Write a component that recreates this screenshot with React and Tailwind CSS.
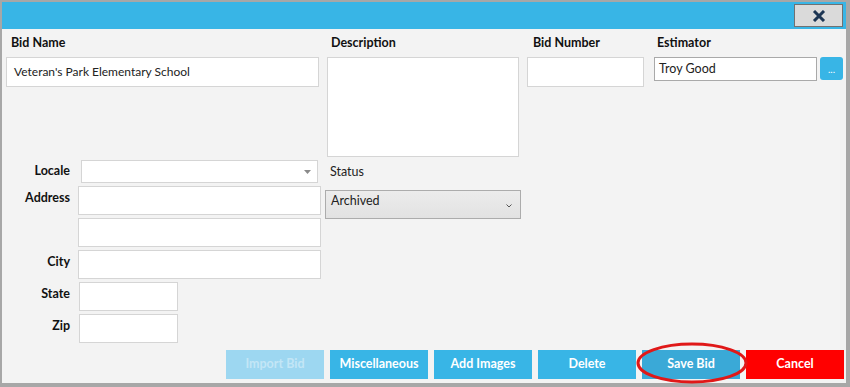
const font = "font-['Segoe_UI',Lato,'Liberation_Sans',sans-serif]"
const box = 'bg-white border border-[#d5d5d5]'

const Field = ({ label, children, labelTop = 'mt-[4px]' }) => (
	<div className='flex items-start'>
		<div className={`w-[68px] text-right text-[12.5px] leading-[16px] font-bold text-[#111] ${labelTop}`}>{label}</div>
		{children}
	</div>
)

const Btn = ({ children, className }) => (
	<button className={`w-[98px] h-[29px] text-[12.5px] font-bold ${className}`}>{children}</button>
)

const App = () => {
	return (
		<div className={`w-[850px] h-[387px] bg-[#a7a7a7] pt-[2px] pl-[2px] pr-[4px] pb-[4px] ${font}`}>
			<div className='w-full h-full bg-[#f3f3f3] flex flex-col'>

				{/* title bar */}
				<div className='h-[27px] bg-[#38b5e6] flex items-center justify-end pr-[3px]'>
					<button className='w-[49px] h-[23px] bg-[#dadada] border border-[#717171] flex items-center justify-center'>
						<svg width='14' height='12' viewBox='0 0 14 12'>
							<path d='M2 1 L12 11 M12 1 L2 11' stroke='#1c3553' strokeWidth='3' />
						</svg>
					</button>
				</div>

				{/* top row */}
				<div className='flex pl-[4px]'>
					<div className='w-[313px]'>
						<div className='h-[28px] flex items-center pl-[5px] text-[12.5px] font-bold text-[#111]'>Bid Name</div>
						<div className={`h-[30px] ${box} flex items-center pl-[7px] text-[12px] text-[#222]`}>Veteran's Park Elementary School</div>
					</div>
					<div className='w-[192px] ml-[8px]'>
						<div className='h-[28px] flex items-center pl-[4px] text-[12.5px] font-bold text-[#111]'>Description</div>
						<div className={`h-[100px] ${box}`}></div>
					</div>
					<div className='w-[117px] ml-[8px]'>
						<div className='h-[28px] flex items-center pl-[6px] text-[12.5px] font-bold text-[#111]'>Bid Number</div>
						<div className={`h-[30px] ${box}`}></div>
					</div>
					<div className='ml-[10px]'>
						<div className='h-[28px] flex items-center pl-[3px] text-[12.5px] font-bold text-[#111]'>Estimator</div>
						<div className='flex gap-[3px]'>
							<div className='w-[163px] h-[24px] bg-white border border-[#a9a9a9] flex items-center pl-[4px] text-[12.5px] text-[#222]'>Troy Good</div>
							<button className='w-[23px] h-[23px] bg-[#38b5e6] rounded-[3px] text-white text-[10px] leading-none flex items-end justify-center pb-[6px]'>...</button>
						</div>
					</div>
				</div>

				{/* lower section */}
				<div className='flex mt-[3px]'>
					<div className='flex flex-col'>
						<Field label='Locale' labelTop='mt-[3px]'>
							<div className={`ml-[11px] w-[237px] h-[23px] ${box} flex items-center justify-end pr-[6px]`}>
								<svg width='7' height='4' viewBox='0 0 7 4'><path d='M0 0 L7 0 L3.5 4 Z' fill='#8a8a8a' /></svg>
							</div>
						</Field>
						<div className='mt-[3px]'>
							<Field label='Address'>
								<div className={`ml-[8px] w-[243px] h-[29px] ${box}`}></div>
							</Field>
						</div>
						<div className='mt-[3px] ml-[76px] w-[243px] h-[29px] bg-white border border-[#d5d5d5]'></div>
						<div className='mt-[3px]'>
							<Field label='City'>
								<div className={`ml-[8px] w-[243px] h-[29px] ${box}`}></div>
							</Field>
						</div>
						<div className='mt-[3px]'>
							<Field label='State'>
								<div className={`ml-[9px] w-[99px] h-[29px] ${box}`}></div>
							</Field>
						</div>
						<div className='mt-[3px]'>
							<Field label='Zip'>
								<div className={`ml-[9px] w-[99px] h-[29px] ${box}`}></div>
							</Field>
						</div>
					</div>

					<div className='ml-[4px]'>
						<div className='h-[30px] pl-[5px] pt-[4px] text-[12.5px] leading-[16px] text-[#222]'>Status</div>
						<div className='w-[196px] h-[29px] bg-gradient-to-b from-[#ececec] to-[#e2e2e2] border border-[#acacac] flex justify-between pl-[5px] pr-[8px]'>
							<span className='text-[12.5px] text-[#222] mt-[1px]'>Archived</span>
							<svg className='mt-[13px]' width='6' height='4' viewBox='0 0 6 4'><path d='M0.5 0.5 L3 3 L5.5 0.5' stroke='#555' strokeWidth='1' fill='none' /></svg>
						</div>
					</div>
				</div>

				{/* buttons */}
				<div className='flex justify-end gap-[6px] pr-[2px] mt-[7px]'>
					<Btn className='bg-[#9dd7f1] text-[#c3e6f6]'>Import Bid</Btn>
					<Btn className='bg-[#38b5e6] text-white'>Miscellaneous</Btn>
					<Btn className='bg-[#38b5e6] text-white'>Add Images</Btn>
					<Btn className='bg-[#38b5e6] text-white'>Delete</Btn>
					<div className='relative'>
						<Btn className='bg-[#3aa9d7] text-white'>Save Bid</Btn>
						<svg className='absolute left-[-6px] top-[-8px]' width='112' height='42' viewBox='0 0 112 42'>
							<ellipse cx='56' cy='21' rx='54' ry='19' fill='none' stroke='#e01818' strokeWidth='3' />
						</svg>
					</div>
					<Btn className='bg-[#ff0000] text-white'>Cancel</Btn>
				</div>

			</div>
		</div>
	)
}

export default App
